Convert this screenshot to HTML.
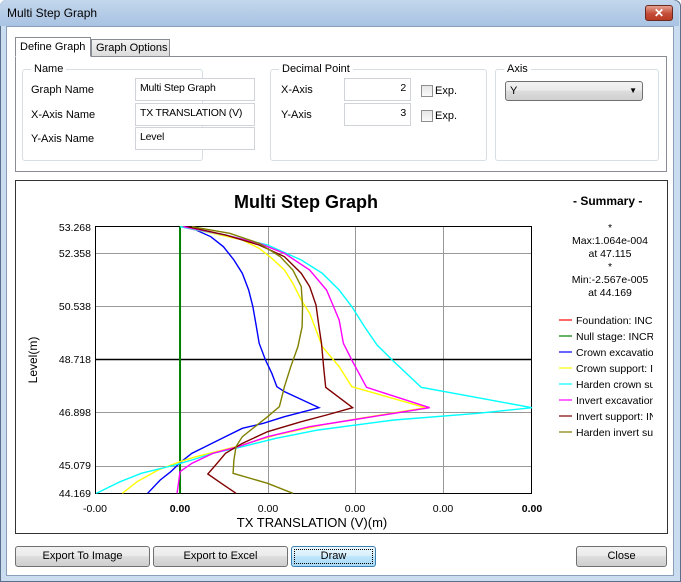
<!DOCTYPE html>
<html><head><meta charset="utf-8"><style>
*{box-sizing:border-box}
body{margin:0;width:681px;height:582px;overflow:hidden;font-family:"Liberation Sans",sans-serif;font-size:11px;color:#000;background:#fff}
.win{position:absolute;left:0;top:0;width:681px;height:582px;background:#c9dcf0;border:1px solid #5a6f8a;border-radius:6px 6px 0 0}
.title{position:absolute;left:0;top:0;width:679px;height:26px;background:linear-gradient(#c3d6ec,#a9c3e3);border-radius:6px 6px 0 0}
.title span{position:absolute;left:7px;top:6px;font-size:12px}
.xbtn{position:absolute;left:645px;top:5px;width:28px;height:16px;background:linear-gradient(#e6a090,#c44d38 55%,#b93a22);border:1px solid #6b2a20;border-radius:3px;color:#fff;font-weight:bold;font-size:12px;text-align:center;line-height:14px}
.client{position:absolute;left:6px;top:26px;width:668px;height:550px;background:#fff;border:1px solid #8aa0ba}
.a{position:absolute;white-space:nowrap}
.tab{position:absolute;border:1px solid #898c95;border-bottom:none;background:#fff;padding:3px 5px;font-size:11px;white-space:nowrap}
.grp{position:absolute;border:1px solid #d5dfe5;border-radius:3px}
.grp>b{position:absolute;left:8px;top:-7px;background:#fff;padding:0 3px;font-weight:normal;white-space:nowrap}
.inp{position:absolute;border:1px solid #d0d4da;background:#fff;padding:3px 4px;height:23px;white-space:nowrap;overflow:hidden;font-size:10.5px;letter-spacing:-0.2px}
.cb{position:absolute;width:12px;height:12px;border:1px solid #8f8f8f;background:linear-gradient(#e6e6e6,#fafafa)}
.btn{position:absolute;height:21px;border:1px solid #707070;border-radius:3px;background:linear-gradient(#f2f2f2 0,#ebebeb 45%,#dddddd 50%,#cfcfcf);text-align:center;line-height:19px;font-size:11px;white-space:nowrap}
</style></head><body>
<div class="win"></div>
<div class="title"><span>Multi Step Graph</span></div>
<div class="xbtn">✕</div>
<div class="client"></div>

<div class="a" style="left:15px;top:56px;width:652px;height:116px;border:1px solid #898c95;background:#fff"></div>
<div class="tab" style="left:15px;top:37px;width:76px;height:20px;z-index:2;border-bottom:1px solid #fff;padding:3px 4px">Define Graph</div>
<div class="tab" style="left:91px;top:39px;width:79px;height:17px;background:linear-gradient(#f3f3f3,#dcdcdc);padding:2px 4px">Graph Options</div>

<div class="grp" style="left:22px;top:69px;width:181px;height:92px"><b>Name</b></div>
<div class="a" style="left:31px;top:84px">Graph Name</div>
<div class="a" style="left:31px;top:109px">X-Axis Name</div>
<div class="a" style="left:31px;top:133px">Y-Axis Name</div>
<div class="inp" style="left:135px;top:78px;width:120px">Multi Step Graph</div>
<div class="inp" style="left:135px;top:103px;width:120px">TX TRANSLATION (V)</div>
<div class="inp" style="left:135px;top:127px;width:120px">Level</div>

<div class="grp" style="left:270px;top:69px;width:217px;height:92px"><b>Decimal Point</b></div>
<div class="a" style="left:281px;top:84px">X-Axis</div>
<div class="a" style="left:281px;top:109px">Y-Axis</div>
<div class="inp" style="left:344px;top:78px;width:67px;text-align:right">2</div>
<div class="inp" style="left:344px;top:103px;width:67px;text-align:right">3</div>
<div class="cb" style="left:421px;top:85px"></div><div class="a" style="left:435px;top:85px">Exp.</div>
<div class="cb" style="left:421px;top:110px"></div><div class="a" style="left:435px;top:110px">Exp.</div>

<div class="grp" style="left:495px;top:69px;width:164px;height:92px"><b>Axis</b></div>
<div class="btn" style="left:505px;top:81px;width:138px;height:20px;text-align:left;padding-left:4px;line-height:18px">Y<span style="position:absolute;right:5px;top:0;font-size:8px">▼</span></div>

<div class="a" style="left:15px;top:180px;width:653px;height:354px;border:1px solid #333;background:#fff"></div>
<div class="a" style="left:234px;top:192px;font-size:18px;font-weight:bold">Multi Step Graph</div>
<div class="a" style="left:573px;top:194px;font-size:12px;font-weight:bold">- Summary -</div>
<div class="a" style="left:560px;top:222px;width:100px;text-align:center;font-size:10.5px;line-height:13px">*<br>Max:1.064e-004<br>at 47.115<br>*<br>Min:-2.567e-005<br>at 44.169</div>

<svg class="a" style="left:0;top:0" width="681" height="582">
<g font-family="Liberation Sans" font-size="10.5" text-anchor="end">
<text x="91" y="231">53.268</text><text x="91" y="257">52.358</text><text x="91" y="310">50.538</text><text x="91" y="363">48.718</text><text x="91" y="416">46.898</text><text x="91" y="469">45.079</text><text x="91" y="497">44.169</text>
</g>
<g font-family="Liberation Sans" font-size="10.5" text-anchor="middle">
<text x="95" y="512">-0.00</text><text x="180" y="512" font-weight="bold">0.00</text><text x="268" y="512">0.00</text><text x="355" y="512">0.00</text><text x="443" y="512">0.00</text><text x="532" y="512" font-weight="bold">0.00</text>
</g>
<text x="312" y="527" font-family="Liberation Sans" font-size="13" text-anchor="middle">TX TRANSLATION (V)(m)</text>
<text transform="translate(37,360) rotate(-90)" font-family="Liberation Sans" font-size="12" text-anchor="middle">Level(m)</text>
<g stroke="#999" stroke-width="1">
<line x1="95" y1="253.5" x2="532" y2="253.5"/><line x1="95" y1="306.5" x2="532" y2="306.5"/><line x1="95" y1="412.5" x2="532" y2="412.5"/><line x1="95" y1="466.5" x2="532" y2="466.5"/>
<line x1="268.5" y1="227" x2="268.5" y2="493"/><line x1="355.5" y1="227" x2="355.5" y2="493"/><line x1="443.5" y1="227" x2="443.5" y2="493"/>
</g>
<rect x="95.5" y="226.5" width="436" height="267" fill="none" stroke="#000"/>
<line x1="95" y1="359.5" x2="532" y2="359.5" stroke="#000" stroke-width="1.5"/>
<g transform="translate(15,180) scale(0.421,0.33333)" fill="none" stroke-width="1.4">
<path vector-effect="non-scaling-stroke" stroke="#008000" stroke-width="2" d="M392 140V940"/>
<path vector-effect="non-scaling-stroke" stroke="#0000ff" d="M395 140L430 150 465 170 495 200 520 240 540 280 555 330 565 380 572 430 580 490 595 540 610 580 622 620 640 635 722 683 640 710 590 730 540 745 500 770 460 795 420 820 395 845 370 875 345 900 315 940"/>
<path vector-effect="non-scaling-stroke" stroke="#ffff00" d="M395 140L470 160 540 180 580 205 610 235 640 270 660 310 680 360 700 400 715 450 730 500 770 560 800 620 975 683 820 715 730 735 620 765 525 800 430 830 392 845 340 870 290 905 255 940"/>
<path vector-effect="non-scaling-stroke" stroke="#00ffff" d="M392 140L500 165 600 195 680 240 730 280 770 330 800 380 830 440 860 495 900 545 965 622 1228 683 1100 700 900 720 720 750 620 775 540 800 470 820 420 840 380 855 300 880 250 905 193 940"/>
<path vector-effect="non-scaling-stroke" stroke="#ff00ff" d="M400 140L500 165 580 190 640 220 700 270 740 330 770 420 780 490 800 540 835 622 985 683 800 720 700 740 600 770 530 800 470 820 420 850 392 875 385 940"/>
<path vector-effect="non-scaling-stroke" stroke="#800000" d="M410 140L500 165 580 195 640 230 680 280 700 320 715 375 722 440 728 490 733 560 738 622 802 683 740 705 680 725 600 755 540 790 500 820 480 850 458 882 490 910 525 940"/>
<path vector-effect="non-scaling-stroke" stroke="#808000" d="M420 140L510 160 580 190 630 230 660 270 680 320 683 380 682 440 672 500 655 560 640 620 628 680 600 710 570 740 540 770 525 800 520 840 518 880 600 910 660 940"/>
</g>
<g stroke-width="1.2">
<line x1="559" y1="320" x2="572" y2="320" stroke="#ff0000"/><line x1="559" y1="336" x2="572" y2="336" stroke="#008000"/><line x1="559" y1="352" x2="572" y2="352" stroke="#0000ff"/><line x1="559" y1="368" x2="572" y2="368" stroke="#ffff00"/><line x1="559" y1="384" x2="572" y2="384" stroke="#00ffff"/><line x1="559" y1="400" x2="572" y2="400" stroke="#ff00ff"/><line x1="559" y1="416" x2="572" y2="416" stroke="#800000"/><line x1="559" y1="432" x2="572" y2="432" stroke="#808000"/>
</g>
</svg>
<div class="a" style="left:576px;top:313px;width:77px;overflow:hidden;white-space:nowrap;font-size:10.5px;line-height:16px">Foundation: INCR<br>Null stage: INCR<br>Crown excavation<br>Crown support: INCR<br>Harden crown sup<br>Invert excavation<br>Invert support: INCR<br>Harden invert sup</div>

<div class="btn" style="left:15px;top:546px;width:135px">Export To Image</div>
<div class="btn" style="left:153px;top:546px;width:135px">Export to Excel</div>
<div class="btn" style="left:291px;top:546px;width:85px;border-color:#3c7fb1;background:linear-gradient(#eaf6fd,#d9f0fc 45%,#bee6fd 50%,#a7d9f5)">Draw<span style="position:absolute;left:2px;top:2px;right:2px;bottom:2px;border:1px dotted #000"></span></div>
<div class="btn" style="left:576px;top:546px;width:91px">Close</div>
</body></html>
